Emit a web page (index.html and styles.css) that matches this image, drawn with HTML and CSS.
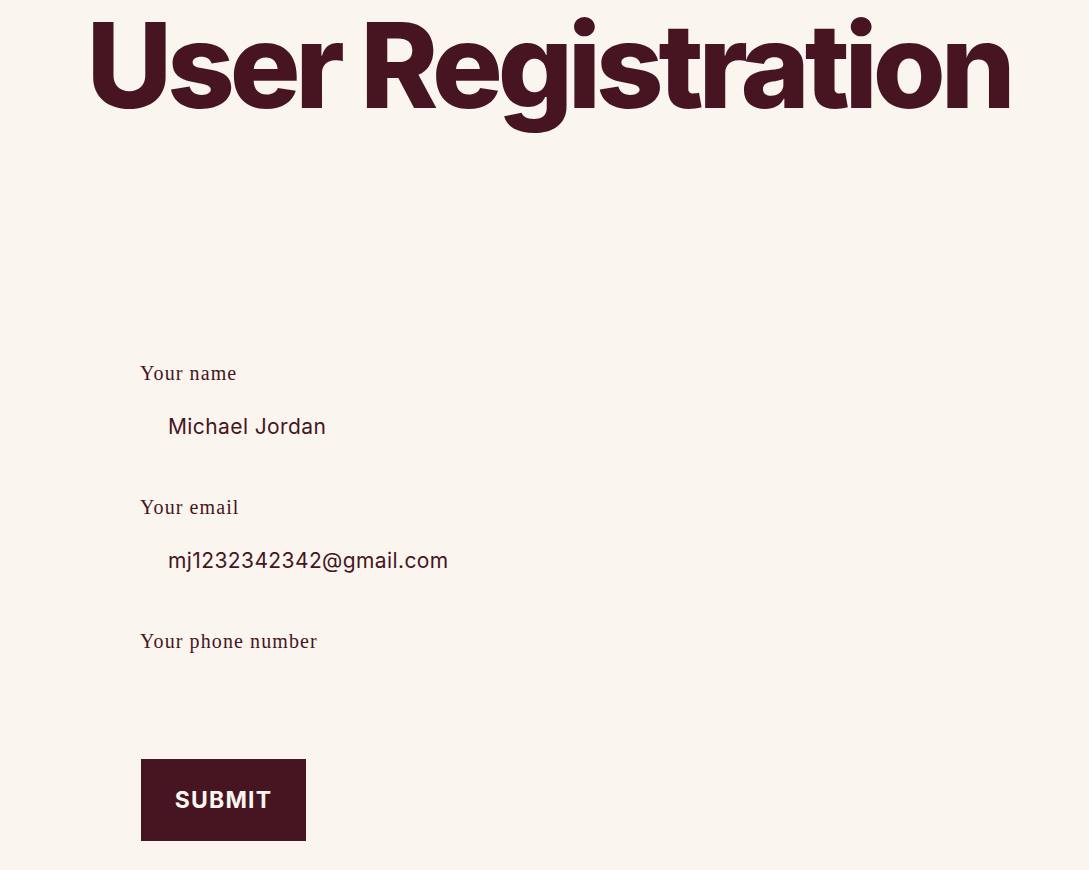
FILE: index.html
```html
<!DOCTYPE html>
<html lang="en">
<head>
<meta charset="utf-8">
<title>User Registration</title>
<link rel="stylesheet" href="styles.css">
</head>
<body>
<main class="page">
  <h1 class="title">User Registration</h1>
  <form class="form">
    <div class="field">
      <label class="label" for="name">Your name</label>
      <input class="input" id="name" type="text" value="Michael Jordan">
    </div>
    <div class="field">
      <label class="label" for="email">Your email</label>
      <input class="input" id="email" type="email" value="mj1232342342@gmail.com">
    </div>
    <div class="field">
      <label class="label" for="phone">Your phone number</label>
      <input class="input" id="phone" type="tel" value="">
    </div>
    <button class="submit" type="button">SUBMIT</button>
  </form>
</main>
</body>
</html>
```
FILE: styles.css
```css
* { box-sizing: border-box; }
html, body {
  margin: 0;
  padding: 0;
  background: #faf5ef;
  color: #461521;
}
.page {
  display: flex;
  flex-direction: column;
  padding-top: 1px;
}
.title {
  margin: 0;
  font-family: Inter, "Noto Sans", sans-serif;
  font-weight: 800;
  font-size: 118px;
  line-height: 1.1;
  letter-spacing: -0.044em;
  text-align: center;
  padding-left: 8px;
}
.form {
  display: flex;
  flex-direction: column;
  align-items: flex-start;
  padding-left: 140px;
  margin-top: 230px;
  gap: 40px;
}
.field {
  display: flex;
  flex-direction: column;
  gap: 14px;
}
.label {
  font-family: "Liberation Serif", serif;
  font-size: 20px;
  line-height: 24px;
  letter-spacing: 1.1px;
}
.input {
  font-family: Inter, "Noto Sans", sans-serif;
  font-size: 21px;
  line-height: 24px;
  letter-spacing: 0.4px;
  height: 56px;
  width: 500px;
  padding: 16px 28px;
  border: none;
  background: transparent;
  color: #461521;
  outline: none;
}
.submit {
  font-family: Inter, "Noto Sans", sans-serif;
  font-weight: 700;
  font-size: 23px;
  letter-spacing: 1.2px;
  height: 82px;
  width: 165px;
  padding: 0;
  border: none;
  background: #461521;
  color: #faf5ef;
  margin-left: 1px;
  margin-top: -4px;
}
```
